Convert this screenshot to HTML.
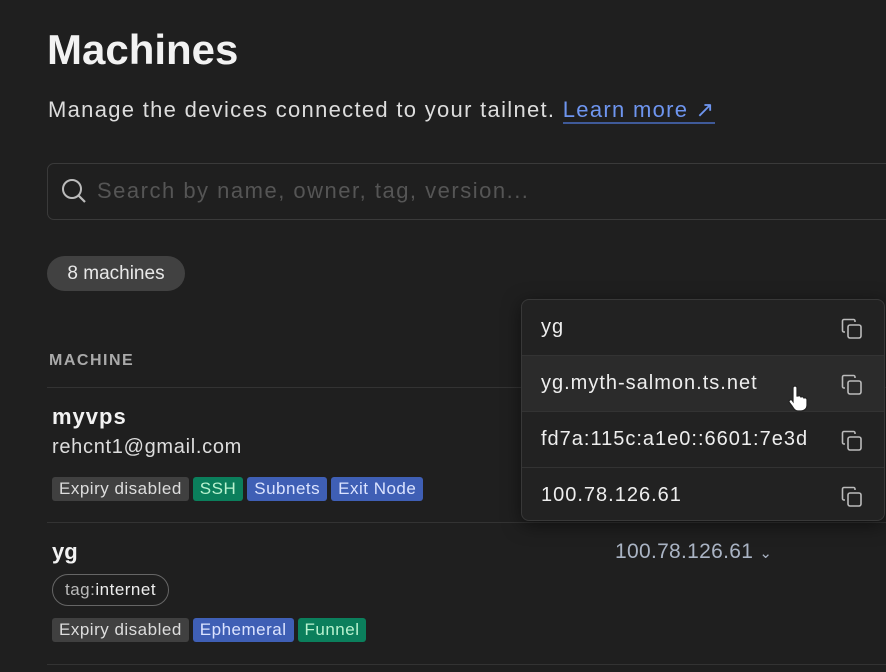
<!DOCTYPE html>
<html><head><style>
body{margin:0;width:886px;height:672px;background:#1f1f1f;overflow:hidden;font-family:"Liberation Sans",sans-serif;color:#f2f2f2;position:relative}
.a{position:absolute;white-space:nowrap}
.b{display:inline-block;height:24px;line-height:24px;padding:0 7px;border-radius:3px;font-size:17px;margin-right:4px;letter-spacing:.5px}
.g{background:#404040;color:#ddd}.gr{background:#0b7f5c;color:#b8f2cf}.bl{background:#3f5fb5;color:#dbe3ff}
.line{position:absolute;left:47px;right:0;height:1px;background:#333}
.pop{position:absolute;left:521px;top:299px;width:362px;height:220px;background:#222;border:1px solid #383838;border-radius:8px;overflow:hidden;box-shadow:0 4px 18px rgba(0,0,0,.5)}
.pr{height:55px;line-height:55px;padding-left:19px;font-size:20px;color:#eee;position:relative;border-top:1px solid #333;letter-spacing:1px}
.pr:first-child{border-top:none}
.pr svg{position:absolute;right:20px;top:17px}
</style></head><body>
<div class="a" style="left:47px;top:26px;font-size:42px;font-weight:bold;letter-spacing:0">Machines</div>
<div class="a" style="left:48px;top:97px;font-size:22px;color:#ddd;letter-spacing:1.3px">Manage the devices connected to your tailnet. <span style="color:#6e95ef;border-bottom:2px solid #3f5a99">Learn more ↗</span></div>
<div class="a" style="left:47px;top:163px;width:860px;height:55px;border:1px solid #3a3a3a;border-radius:7px"></div>
<svg class="a" style="left:60px;top:177px" width="28" height="28" viewBox="0 0 28 28"><circle cx="12" cy="12" r="9" fill="none" stroke="#bbb" stroke-width="2"/><path d="M18.5 18.5L25 25" stroke="#bbb" stroke-width="2.2"/></svg>
<div class="a" style="left:97px;top:178px;font-size:22px;color:#555;letter-spacing:1.5px">Search by name, owner, tag, version...</div>
<div class="a" style="left:47px;top:256px;width:138px;height:35px;border-radius:18px;background:#414141;font-size:19px;line-height:35px;text-align:center;color:#e8e8e8">8 machines</div>
<div class="a" style="left:49px;top:352px;font-size:16px;font-weight:bold;color:#aaa;letter-spacing:1.5px">MACHINE</div>
<div class="line" style="top:387px"></div>
<div class="a" style="left:52px;top:404px;font-size:22px;font-weight:bold;letter-spacing:1px">myvps</div>
<div class="a" style="left:52px;top:436px;font-size:20px;color:#ddd;letter-spacing:.7px">rehcnt1@gmail.com</div>
<div class="a" style="left:52px;top:477px"><span class="b g">Expiry disabled</span><span class="b gr">SSH</span><span class="b bl">Subnets</span><span class="b bl">Exit Node</span></div>
<div class="line" style="top:522px"></div>
<div class="a" style="left:52px;top:539px;font-size:22px;font-weight:bold">yg</div>
<div class="a" style="left:52px;top:574px;height:30px;line-height:30px;padding:0 12px;border:1px solid #666;border-radius:16px;font-size:17px;color:#bbb;letter-spacing:.5px">tag:<span style="color:#eee">internet</span></div>
<div class="a" style="left:52px;top:618px"><span class="b g">Expiry disabled</span><span class="b bl">Ephemeral</span><span class="b gr">Funnel</span></div>
<div class="line" style="top:664px"></div>
<div class="a" style="left:615px;top:540px;font-size:21px;color:#aab4c4;letter-spacing:.3px">100.78.126.61 <span style="font-size:15px">⌄</span></div>
<div class="pop">
<div class="pr">yg<svg width="24" height="24" viewBox="0 0 24 24" fill="none" stroke="#bbb" stroke-width="1.6"><rect x="8" y="8" width="13" height="13" rx="2"/><path d="M5 15H4a1.5 1.5 0 0 1-1.5-1.5V4A1.5 1.5 0 0 1 4 2.5h9.5A1.5 1.5 0 0 1 15 4v1"/></svg></div>
<div class="pr" style="background:#2b2b2b">yg.myth-salmon.ts.net<svg width="24" height="24" viewBox="0 0 24 24" fill="none" stroke="#bbb" stroke-width="1.6"><rect x="8" y="8" width="13" height="13" rx="2"/><path d="M5 15H4a1.5 1.5 0 0 1-1.5-1.5V4A1.5 1.5 0 0 1 4 2.5h9.5A1.5 1.5 0 0 1 15 4v1"/></svg></div>
<div class="pr">fd7a:115c:a1e0::6601:7e3d<svg width="24" height="24" viewBox="0 0 24 24" fill="none" stroke="#bbb" stroke-width="1.6"><rect x="8" y="8" width="13" height="13" rx="2"/><path d="M5 15H4a1.5 1.5 0 0 1-1.5-1.5V4A1.5 1.5 0 0 1 4 2.5h9.5A1.5 1.5 0 0 1 15 4v1"/></svg></div>
<div class="pr">100.78.126.61<svg width="24" height="24" viewBox="0 0 24 24" fill="none" stroke="#bbb" stroke-width="1.6"><rect x="8" y="8" width="13" height="13" rx="2"/><path d="M5 15H4a1.5 1.5 0 0 1-1.5-1.5V4A1.5 1.5 0 0 1 4 2.5h9.5A1.5 1.5 0 0 1 15 4v1"/></svg></div>
</div>
<svg class="a" style="left:786px;top:385px" width="26" height="28" viewBox="0 0 26 28"><path d="M7 3a2 2 0 0 1 4 0v8h1a2 2 0 0 1 3 1a2 2 0 0 1 3 1a2 2 0 0 1 3 1.5V20c0 4-3 6-6 6h-3c-3 0-4-2-6-5l-3-4a2 2 0 0 1 3-2l1 1.5z" fill="#fff" stroke="#222" stroke-width="1.2"/></svg>
</body></html>
